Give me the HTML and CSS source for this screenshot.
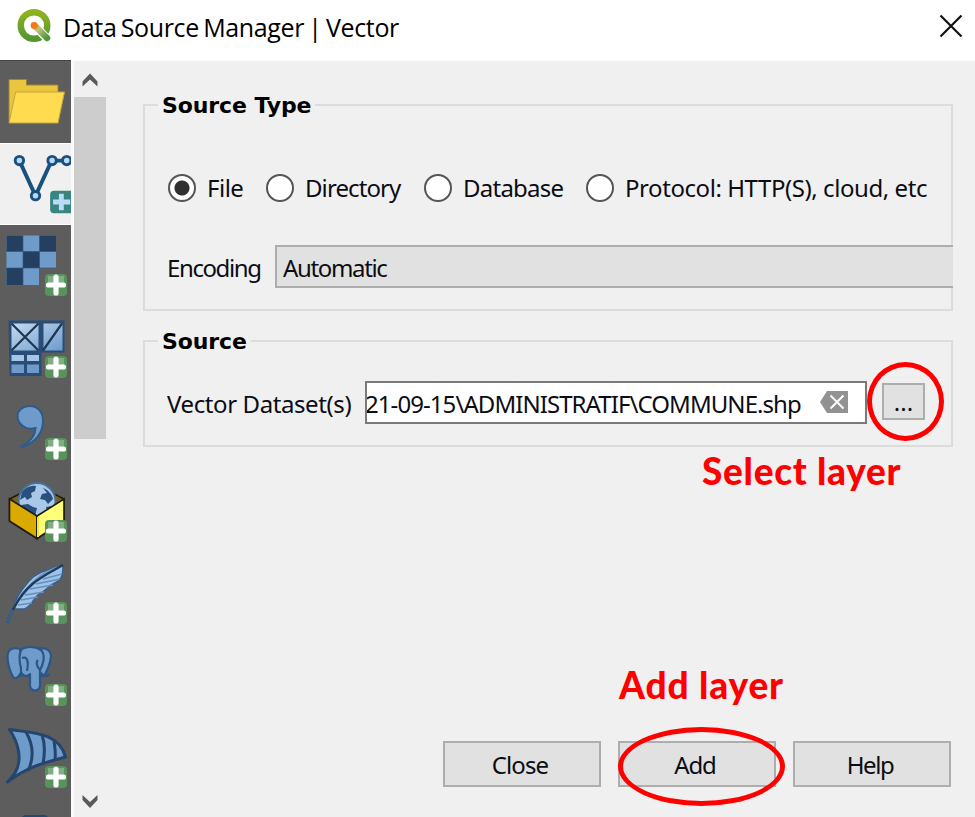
FILE: index.html
```html
<!DOCTYPE html>
<html lang="en">
<head>
<meta charset="utf-8">
<title>Data Source Manager | Vector</title>
<link rel="stylesheet" href="styles.css">
</head>
<body>
<svg width="0" height="0" class="defs">
  <defs>
    <linearGradient id="pane" x1="0" y1="0" x2="1" y2="1"><stop offset="0" stop-color="#c4daf1"/><stop offset="1" stop-color="#6d9bcd"/></linearGradient>
    <linearGradient id="ring" x1="0" y1="0" x2="0" y2="1"><stop offset="0" stop-color="#8fb31f"/><stop offset="1" stop-color="#55962f"/></linearGradient>
    <linearGradient id="tail" x1="0" y1="0" x2="1" y2="1"><stop offset="0" stop-color="#ee7913"/><stop offset=".3" stop-color="#b9c97a"/><stop offset="1" stop-color="#4f9638"/></linearGradient>
    <g id="plus">
      <rect x="45" y="49" width="22" height="22" rx="4" fill="#57935a"/>
      <rect x="48" y="51" width="16" height="8" fill="#80ad81"/>
      <path d="M56 52v16M48.500 60h15" stroke="#fff" stroke-width="5.200" stroke-linecap="round"/>
    </g>
  </defs>
</svg>
<header class="titlebar">
  <svg class="logo" width="36" height="36" viewBox="0 0 36 36">
    <circle cx="18" cy="17.500" r="13.300" fill="none" stroke="url(#ring)" stroke-width="6.400"/>
    <path d="M19 18l12 12.500" stroke="#fff" stroke-width="8.500"/>
    <path d="M18.500 17.500 31 30" stroke="url(#tail)" stroke-width="6.500" stroke-linecap="round"/>
    <circle cx="18" cy="17.500" r="3.400" fill="#f07c1c"/>
  </svg>
  <h1 class="title"><span class="fit t-title">Data Source Manager | Vector</span></h1>
  <svg class="close" width="24" height="24" viewBox="0 0 24 24"><path d="M1.500 1.500l21 21M22.500 1.500l-21 21" stroke="#111" stroke-width="2.200"/></svg>
</header>
<div class="main">
  <nav class="sidebar">
    <svg class="tile" viewBox="0 0 71 82"><path d="M9 18.500h17.500v5.500H58v8L54 61H9z" fill="#eac63f" stroke="#9c8436"/><path d="M15.500 31H64.500L58 62H9z" fill="#fedb4f" stroke="#c3a33f"/></svg>
    <svg class="tile active" viewBox="0 0 71 82">
      <path d="M19 17l16.500 36L52 17h15.500" fill="none" stroke="#19507f" stroke-width="4"/>
      <g fill="#b9dbf8" stroke="#19507f" stroke-width="3"><circle cx="19" cy="17" r="4.300"/><circle cx="35.500" cy="53" r="4.300"/><circle cx="52.500" cy="17" r="4.300"/><circle cx="67.500" cy="17" r="4.300"/></g>
      <rect x="50.500" y="48" width="26" height="23" rx="4" fill="#3b857f"/><path d="M62 51v17M53.500 59.500H71" stroke="#b9dcf8" stroke-width="5"/>
    </svg>
    <svg class="tile" viewBox="0 0 71 82"><path d="M6.500 10.500H56V43H39.500v17h-33z" fill="#6f9bcb"/><path d="M6.500 10.500H23v16H6.500zM39.500 10.500H56v16H39.500zM23 26.500h16.500V43H23zM6.500 43H23v17H6.500z" fill="#243f60"/><path d="M23 10.500V60M39.500 10.500V60M6.500 26.500H56M6.500 43H56" stroke="#36567d" stroke-width=".7"/><use href="#plus"/></svg>
    <svg class="tile" viewBox="0 0 71 82"><path d="M8.500 13.500h56v32h-23V69h-32z" fill="#294d76"/><path d="M11.500 16.500h27v27h-27zM43.500 16.500h19v27h-19z" fill="url(#pane)"/><path d="M11.500 16.500l27 27m0-27l-27 27M62 16.500l-19 27" stroke="#20364f" stroke-width="2.200"/><path d="M11.500 48H24v6H11.500zM27 48h12v6H27z" fill="#a6c6e7"/><path d="M11.500 57.500H24V66H11.500zM27 57.500h12V66H27z" fill="#6f9bcb"/><use href="#plus"/></svg>
    <svg class="tile" viewBox="0 0 71 82"><path d="M21.500 57.500C31 52 35 47 35.500 39c-3.500 1-8 .8-11-1C20 35.500 17.500 32 17.500 27c0-5.500 5-10 12-10 8.500 0 13.500 6 13.500 15 0 12.500-8 21-20 26z" fill="#6f9bcb" stroke="#2f5a8c" stroke-width="2"/><use href="#plus"/></svg>
    <svg class="tile" viewBox="0 0 71 82">
      <path d="M9.500 28 37 14l27 14v22L37 67.500 9.500 50z" fill="#7b6410" stroke="#1f1c10" stroke-width="1.500"/>
      <circle cx="37" cy="30.500" r="18.500" fill="#a9c8e8" stroke="#45709f" stroke-width="2"/>
      <path d="M22 21c4-5 9-7 14-6l-1 5-4 2 1 4-5 3-2-3-5 3zM43 17c5 2 9 6 10 11l-5 5-3-4-5-1 2-5 5-1zM21 34l7-1 5 3 4 1-2 8-8-2zM46 36l6-1-5 6z" fill="#284f7d"/>
      <path d="M9.500 28 37 45v22.500L9.500 50z" fill="#d9aa00" stroke="#1f1c10" stroke-width="1.600"/><path d="M64 28 37 45v22.500L64 50z" fill="#ffff77" stroke="#1f1c10" stroke-width="1.600"/><path d="M38 46v20" stroke="#f7e33e" stroke-width="2"/><use href="#plus"/>
    </svg>
    <svg class="tile" viewBox="0 0 71 82">
      <path d="M63 12c-9 4-23 4-34 16C22 36 15 45 13 56h11c8-2 9-12 17-16 5-3 8-7 12-9 9-4 10-8 10-19z" fill="#9fc3e8" stroke="#365f8d" stroke-width="1.500"/>
      <path d="M62 12C48 22 31 29 14 56c15-26 22-37 49-44z" fill="#6f9bcb"/>
      <path d="M30 36l23-4M25 42l19-3M21 47l17-3M18 52l14-2M36 31l24-5M43 26l19-5" stroke="#668fbd" stroke-width="1.500"/>
      <path d="M63 12C44 23 27 29 14 55 10 59 9 65 7.500 70" fill="none" stroke="#203b59" stroke-width="2.400"/><path d="M13 57c-4 3-4 8-5 13" stroke="#365f8d" stroke-width="3" fill="none"/><use href="#plus"/>
    </svg>
    <svg class="tile" viewBox="0 0 71 82"><g fill="#6f9bcb" stroke="#2b5687" stroke-width="2.200" stroke-linejoin="round"><path d="M20 14c-7-2-12 0-12.500 7 0 8 2 14 5 20 2 4 5 2 7-1l3-5z"/><path d="M38 14c8-2 13 1 13 8-1 8-4 14-7 19l-5-5z"/><path d="M21 15c5-4 14-4 20 0 5 5 2 15-1 20v16c-1 6-9 6-10 0V39c-4 4-10 1-9-6-2-7-2-13 0-18z"/><path d="M22 23c5-2 7 3 5 13M38 25c-3 3 0 8 2 10M23 40l-5 2M41 40c3 2 6 1 9-1" fill="none"/></g><use href="#plus"/></svg>
    <svg class="tile" viewBox="0 0 71 82"><path d="M9.500 12.500C32 16 59 15 65.500 40 43 46 27 50 7.500 65c3-3 6-6 8-10 7-13 3-29-6-42.500z" fill="#6f9bcb" stroke="#24466e" stroke-width="3" stroke-linejoin="round"/><path d="M26 15c7 12 8 26 2 39M42 18c3 8 3 18 1 29M54 24c1 7 2 12 1 19" fill="none" stroke="#24466e" stroke-width="3"/><use href="#plus"/></svg>
    <svg class="tile" viewBox="0 0 71 82"><rect x="21" y="16" width="28" height="30" rx="5" fill="#25486f"/></svg>
  </nav>
  <div class="scrollbar">
    <svg class="arrow" viewBox="0 0 32 36"><path d="M8.500 25.500v-5L16 12.500l7.500 8v5L16 18.500z" fill="#5a5a5a"/></svg>
    <div class="thumb"></div>
    <svg class="arrow" viewBox="0 0 32 36"><path d="M8.500 14v5L16 27l7.500-8v-5L16 21z" fill="#5a5a5a"/></svg>
  </div>
  <main class="content">
    <section class="group type">
      <h2 class="legend"><span class="fit">Source Type</span></h2>
      <div class="radios">
        <label class="radio r1"><span class="dot on"></span><span class="fit t-file">File</span></label>
        <label class="radio r2"><span class="dot"></span><span class="fit t-dir">Directory</span></label>
        <label class="radio r3"><span class="dot"></span><span class="fit t-db">Database</span></label>
        <label class="radio r4"><span class="dot"></span><span class="fit t-proto">Protocol: HTTP(S), cloud, etc</span></label>
      </div>
      <div class="encoding"><span class="enc-label"><span class="fit t-enc">Encoding</span></span><div class="combo"><span class="fit t-auto">Automatic</span></div></div>
    </section>
    <section class="group source">
      <h2 class="legend"><span class="fit">Source</span></h2>
      <div class="dataset">
        <span class="data-label"><span class="fit t-data">Vector Dataset(s)</span></span>
        <div class="input"><span class="fit t-path">21-09-15\ADMINISTRATIF\COMMUNE.shp</span><svg class="clear" width="28" height="22" viewBox="0 0 28 22"><path d="M0 11 7 0h21v22H7z" fill="#929292"/><path d="M10.500 4.500l13 13M23.500 4.500l-13 13" stroke="#fff" stroke-width="2"/></svg></div>
        <button class="btn browse"><span class="fit">...</span></button>
      </div>
    </section>
    <footer class="buttons">
      <button class="btn"><span class="fit t-close">Close</span></button>
      <button class="btn"><span class="fit t-add">Add</span></button>
      <button class="btn"><span class="fit t-help">Help</span></button>
    </footer>
  </main>
</div>
<div class="mark mark-select"></div>
<div class="note note-select"><span class="fit t-nsel">Select layer</span></div>
<div class="mark mark-add"></div>
<div class="note note-add"><span class="fit t-nadd">Add layer</span></div>
</body>
</html>
```
FILE: styles.css
```css
* { box-sizing: border-box; }
body { margin: 0; width: 975px; height: 817px; overflow: hidden; position: relative; background: #f0f0f0; color: #0c0c14; font: 24px/30px "Noto Sans", sans-serif; display: flex; flex-direction: column; }
.defs { position: absolute; }
h1, h2 { margin: 0; font-weight: 400; }
.fit { display: inline-block; white-space: nowrap; }
.titlebar { height: 61px; flex: none; background: #fff; display: flex; align-items: flex-start; padding: 8px 12px 0 16px; }
.title { font: 25px/34px "Open Sans", sans-serif; margin: 2px auto 0 11px; color: #000; }
.close { margin-top: 6px; }
.main { flex: 1; min-height: 0; display: flex; }
.sidebar { width: 71px; flex: none; overflow: hidden; background: #5d5d5d; border-top: 1px solid #454545; margin-top: -1px; }
.tile { display: block; width: 71px; height: 82px; }
.tile.active { background: #f0f0f0; border-top: 1px solid #fff; border-bottom: 1px solid #fff; }
.scrollbar { width: 35px; flex: none; border-left: 3px solid #fafafa; display: flex; flex-direction: column; }
.arrow { width: 32px; height: 36px; flex: none; display: block; }
.thumb { height: 342px; background: #cdcdcd; margin-bottom: auto; }
.content { flex: 1; padding: 43px 22px 0 37px; display: flex; flex-direction: column; }
.group { border: 2px solid #dcdcdc; flex: none; }
.type { height: 207px; }
.source { height: 107px; margin-top: 29px; }
.legend { width: max-content; margin: -15px 0 0 13px; padding: 0 4px; background: #f0f0f0; font: 700 22px/30px "DejaVu Sans", sans-serif; letter-spacing: -.1px; color: #000; }
.radios { display: flex; margin: 51px 0 0 23px; height: 32px; align-items: center; }
.radio { display: flex; align-items: center; gap: 11px; flex: none; }
.r1 { width: 98px; }
.r2 { width: 158px; }
.r3 { width: 162px; }
.dot { width: 28px; height: 28px; flex: none; border: 2px solid #555; border-radius: 50%; background: #fff; }
.dot.on { background: radial-gradient(circle, #303030 7px, #fff 8px); }
.encoding { display: flex; align-items: center; margin: 41px -2px 0 22px; height: 43px; }
.enc-label { width: 108px; flex: none; padding-top: 2px; }
.combo { flex: 1; height: 43px; border: 2px solid #adadad; border-right: 0; background: #e1e1e1; padding: 6px 0 0 6px; }
.dataset { display: flex; align-items: flex-start; margin: 24px 0 0 22px; }
.data-label { width: 198px; flex: none; padding-top: 8px; }
.input { width: 502px; height: 43px; flex: none; border: 2px solid #7a7a7a; background: #fff; display: flex; align-items: center; overflow: hidden; }
.input .fit { width: 435px; margin: 2px 0 0 -2px; flex: none; }
.clear { margin-left: 20px; margin-top: -1px; flex: none; }
.btn { width: 158px; height: 46px; border: 2px solid #adadad; background: #e1e1e1; padding: 0; font: inherit; color: inherit; }
.browse { width: 43px; height: 37px; margin: 2px 0 0 15px; }
.buttons { display: flex; gap: 17px; margin: auto 2px 30px auto; }
.buttons .btn { padding: 1px 4px 0 0; }
.mark { position: absolute; border: 5px solid #f00; border-radius: 50%; }
.mark-select { left: 867px; top: 362px; width: 77px; height: 79px; }
.mark-add { left: 618px; top: 727px; width: 167px; height: 79px; }
.note { position: absolute; color: #f00; font: 900 37px/44px Lato, sans-serif; white-space: nowrap; }
.note-select { left: 702px; top: 449px; }
.note-add { left: 619px; top: 663px; }
/* letter fitting */
.t-title { letter-spacing: -.35px; word-spacing: -1.9px; }
.t-file { letter-spacing: -.5px; }
.t-dir { letter-spacing: -.9px; }
.t-db { letter-spacing: -.75px; }
.t-proto { letter-spacing: -.43px; }
.t-enc { letter-spacing: -1.4px; }
.t-auto { letter-spacing: -1.35px; }
.t-data { letter-spacing: -.4px; }
.t-path { letter-spacing: -.93px; }
.t-close { letter-spacing: -.9px; }
.t-add { letter-spacing: -1.2px; }
.t-help { letter-spacing: -1.4px; }
.t-nsel { letter-spacing: .7px; }
.t-nadd { letter-spacing: .85px; }
```
